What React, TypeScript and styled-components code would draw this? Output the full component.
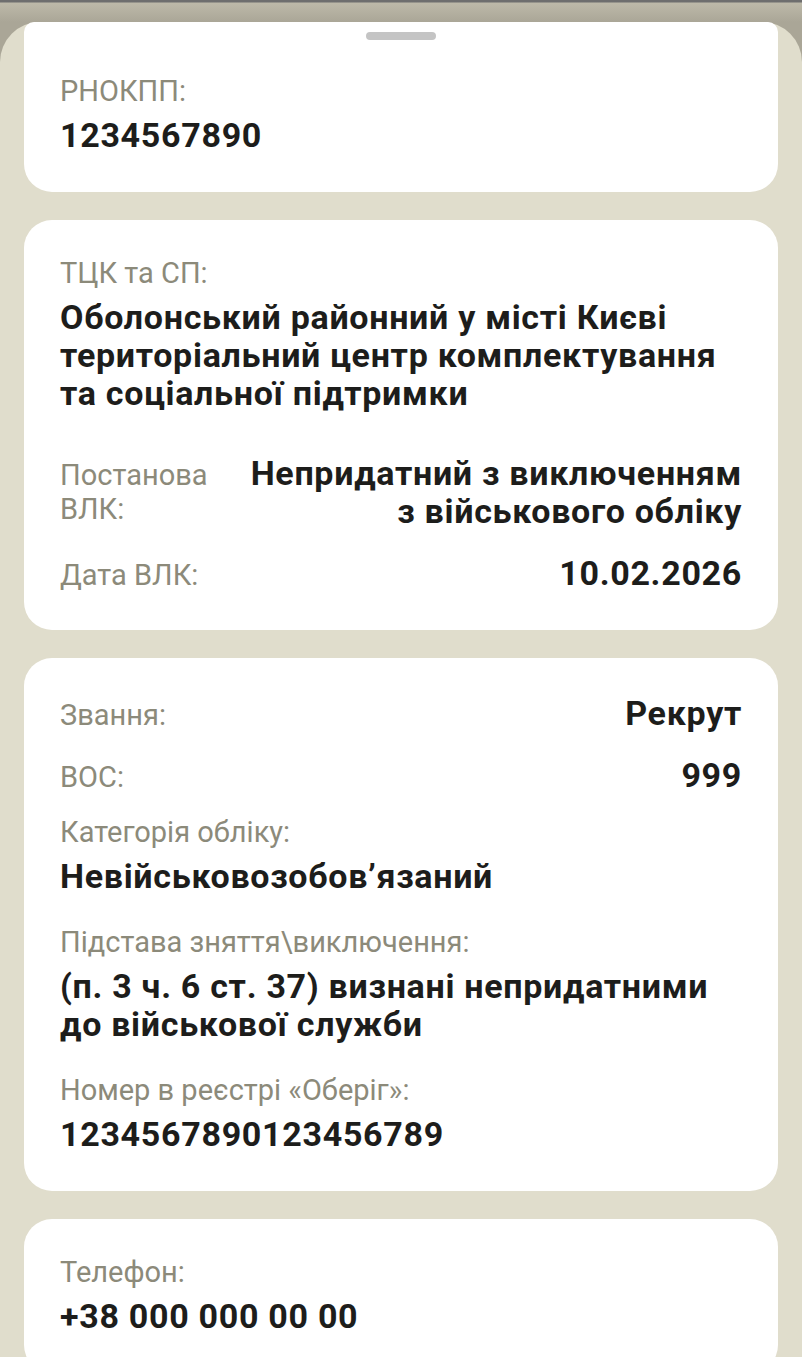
import React from "react";
import styled, { createGlobalStyle } from "styled-components";

const GlobalStyle = createGlobalStyle`
  html, body {
    margin: 0;
    padding: 0;
    background: #e0ddcc;
  }
  * {
    box-sizing: border-box;
  }
`;

const Screen = styled.div`
  height: 1357px;
  padding-top: 22px;
  background: linear-gradient(
    to bottom,
    #6e6e6e 0,
    #6e6e6e 2px,
    #bdb9a9 3px,
    #aaa697 22px
  );
  font-family: Roboto, "Noto Sans", sans-serif;
  overflow: hidden;
`;

const Sheet = styled.div`
  position: relative;
  min-height: 1335px;
  padding: 0 24px 40px;
  display: flex;
  flex-direction: column;
  gap: 28px;
  background: #e0ddcc;
  border-radius: 40px 40px 0 0;
`;

const Handle = styled.div`
  position: absolute;
  top: 10px;
  left: 50%;
  width: 70px;
  height: 8px;
  margin-left: -35px;
  border-radius: 4px;
  background: #c4c4c4;
`;

const Card = styled.section<{ $top?: boolean }>`
  display: flex;
  flex-direction: column;
  padding: ${(p) => (p.$top ? "52px" : "36px")} 36px 38px;
  background: #ffffff;
  border-radius: ${(p) => (p.$top ? "10px 10px 28px 28px" : "28px")};
`;

const Field = styled.div`
  display: flex;
  flex-direction: column;
  gap: 8px;

  & + & {
    margin-top: 30px;
  }
`;

const Row = styled.div`
  display: flex;
  justify-content: space-between;
  align-items: baseline;
  gap: 20px;

  & + & {
    margin-top: 24px;
  }
  ${Field} + & {
    margin-top: 42px;
  }
  & + ${Field} {
    margin-top: 21px;
  }
`;

const Label = styled.div`
  max-width: 160px;
  font-size: 29px;
  line-height: 34px;
  color: #8c8a7a;

  ${Field} > & {
    max-width: none;
  }
`;

const Value = styled.div<{ $right?: boolean }>`
  flex: 1;
  font-size: 34px;
  line-height: 38px;
  font-weight: 700;
  letter-spacing: 0.7px;
  color: #1d1d1b;
  text-align: ${(p) => (p.$right ? "right" : "left")};
`;

type Item = { label: string; value: string; inline?: boolean };

const cards: Item[][] = [
  [{ label: "РНОКПП:", value: "1234567890" }],
  [
    {
      label: "ТЦК та СП:",
      value:
        "Оболонський районний у місті Києві територіальний центр комплектування та соціальної підтримки",
    },
    {
      label: "Постанова ВЛК:",
      value: "Непридатний з виключенням з військового обліку",
      inline: true,
    },
    { label: "Дата ВЛК:", value: "10.02.2026", inline: true },
  ],
  [
    { label: "Звання:", value: "Рекрут", inline: true },
    { label: "ВОС:", value: "999", inline: true },
    { label: "Категорія обліку:", value: "Невійськовозобов’язаний" },
    {
      label: "Підстава зняття\\виключення:",
      value: "(п. 3 ч. 6 ст. 37) визнані непридатними до військової служби",
    },
    { label: "Номер в реєстрі «Оберіг»:", value: "1234567890123456789" },
  ],
  [{ label: "Телефон:", value: "+38 000 000 00 00" }],
];

const App = () => {
  return (
    <>
      <GlobalStyle />
      <Screen>
        <Sheet>
          {cards.map((items, i) => (
            <Card key={i} $top={i === 0}>
              {items.map((item) =>
                item.inline ? (
                  <Row key={item.label}>
                    <Label>{item.label}</Label>
                    <Value $right>{item.value}</Value>
                  </Row>
                ) : (
                  <Field key={item.label}>
                    <Label>{item.label}</Label>
                    <Value>{item.value}</Value>
                  </Field>
                )
              )}
            </Card>
          ))}
          <Handle />
        </Sheet>
      </Screen>
    </>
  );
};

export default App;
